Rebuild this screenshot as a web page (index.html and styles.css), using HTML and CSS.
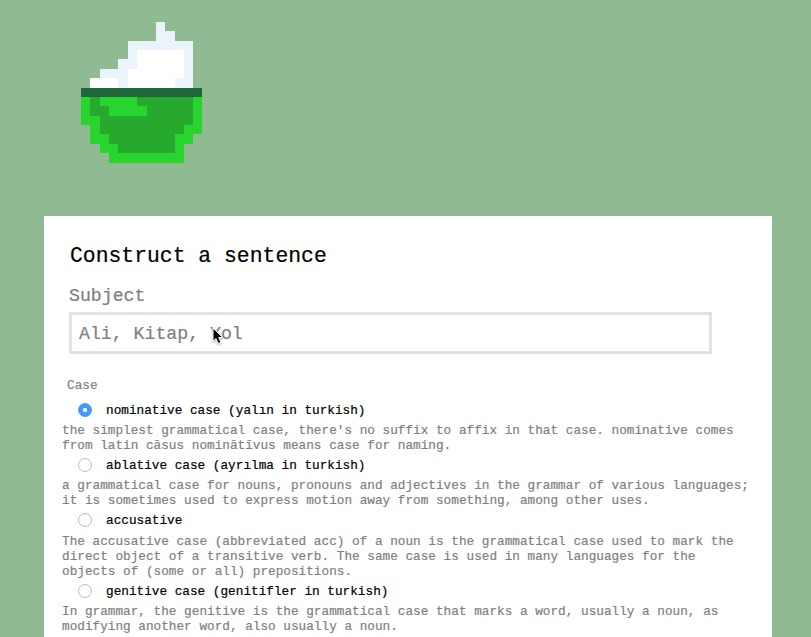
FILE: index.html
```
<!DOCTYPE html>
<html lang="en">
<head>
<meta charset="utf-8">
<title>Construct a sentence</title>
<link rel="stylesheet" href="styles.css">
</head>
<body>
<header class="header">
  <svg class="logo" viewBox="0 0 13 15" preserveAspectRatio="none" shape-rendering="crispEdges" aria-hidden="true">
    <path fill="#ebf4fc" d="M8 0h1v1h1v1h2v5H4V6H2V5h2V4h1V2h3z"/>
    <path fill="#fff" d="M6 3h5v3h-1v1H5V5h1zM1 6h3v1H1z"/>
    <path fill="#28d52f" d="M0 8h13v4h-1v1h-1v2H3v-1H2v-1H1v-2H0z"/>
    <path fill="#27a92e" d="M1 8h1v1h1v1h4V9H6V8h6v3h-1v1h-1v2H4v-1H3v-1H2v-2H1z"/>
    <path fill="#1f663b" d="M0 7h13v1H0z"/>
  </svg>
</header>
<main class="card">
  <h1 class="title">Construct a sentence</h1>
  <label class="subject" for="subject">Subject</label>
  <div class="field">
    <input class="input" id="subject" type="text" placeholder="Ali, Kitap, Yol">
    <svg class="cursor" viewBox="0 0 12 18" aria-hidden="true">
      <path d="M1 1v13.2l3-2.7 2.2 5 2.7-1.2-2.2-4.8h4z" fill="#000" stroke="#fff" stroke-width="1"/>
    </svg>
  </div>
  <h2 class="group">Case</h2>
  <div class="option">
    <label class="choice"><input class="radio" type="radio" name="case" checked>nominative case (yalın in turkish)</label>
    <p class="hint">the simplest grammatical case, there's no suffix to affix in that case. nominative comes<br>from latin cāsus nominātīvus means case for naming.</p>
  </div>
  <div class="option">
    <label class="choice"><input class="radio" type="radio" name="case">ablative case (ayrılma in turkish)</label>
    <p class="hint">a grammatical case for nouns, pronouns and adjectives in the grammar of various languages;<br>it is sometimes used to express motion away from something, among other uses.</p>
  </div>
  <div class="option option-long">
    <label class="choice"><input class="radio" type="radio" name="case">accusative</label>
    <p class="hint">The accusative case (abbreviated acc) of a noun is the grammatical case used to mark the<br>direct object of a transitive verb. The same case is used in many languages for the<br>objects of (some or all) prepositions.</p>
  </div>
  <div class="option">
    <label class="choice"><input class="radio" type="radio" name="case">genitive case (genitifler in turkish)</label>
    <p class="hint">In grammar, the genitive is the grammatical case that marks a word, usually a noun, as<br>modifying another word, also usually a noun.</p>
  </div>
</main>
</body>
</html>
```
FILE: styles.css
```
* { box-sizing: border-box; }
html { height: 100%; overflow: hidden; }
body {
  margin: 0;
  height: 100%;
  overflow: hidden;
  background: #90ba92;
  font-family: "Liberation Mono", "Courier New", monospace;
  font-size: 12.73px;
  line-height: 15px;
  color: #000;
}
.header { height: 216px; padding: 22px 0 0 80.5px; }
.logo { display: block; width: 121.7px; height: 140.6px; }
.card {
  width: 728px;
  min-height: 421px;
  margin-left: 44px;
  padding: 28px 0 0 18px;
  background: #fff;
}
.title {
  margin: 0 0 0 8px;
  font-size: 21.4px;
  font-weight: 400;
  line-height: 24px;
  -webkit-text-stroke: .2px #000;
}
.subject {
  display: block;
  margin: 17px 0 0 7px;
  font-size: 18.2px;
  line-height: 22px;
  color: #808080;
  -webkit-text-stroke: .2px #808080;
}
.field { position: relative; width: 643px; margin: 5px 0 0 7px; }
.input {
  display: block;
  width: 100%;
  height: 42px;
  padding: 2px 7px 0;
  border: 3px solid #e2e2e2;
  border-radius: 0;
  outline: 0;
  background: #fff;
  font: 18.2px "Liberation Mono", "Courier New", monospace;
  color: #000;
}
.input::placeholder { color: #808080; opacity: 1; -webkit-text-stroke: .2px #808080; }
.cursor {
  position: absolute;
  left: 143px;
  top: 15px;
  width: 12px;
  height: 18px;
  filter: drop-shadow(0 1px 1px rgba(0, 0, 0, .35));
}
.group {
  margin: 24px 0 0 5px;
  font-size: 12.73px;
  font-weight: 400;
  color: #808080;
  -webkit-text-stroke: .2px #808080;
}
.option { padding-bottom: 2px; }
.group + .option { margin-top: 7px; }
.choice {
  display: flex;
  align-items: center;
  gap: 14px;
  height: 20px;
  padding-left: 16px;
  -webkit-text-stroke: .2px #000;
}
.radio {
  appearance: none;
  flex: none;
  width: 14px;
  height: 14px;
  margin: 0;
  border: 1px solid #bcbcbc;
  border-radius: 50%;
  background: #fff;
}
.radio:checked {
  border-color: #3f98f7;
  background: radial-gradient(circle, #fff 1.7px, #429cfb 2.5px);
}
.hint { margin: 3px 0 0; color: #808080; white-space: nowrap; -webkit-text-stroke: .2px #808080; }
.option-long .hint { margin-top: 4px; }
```
